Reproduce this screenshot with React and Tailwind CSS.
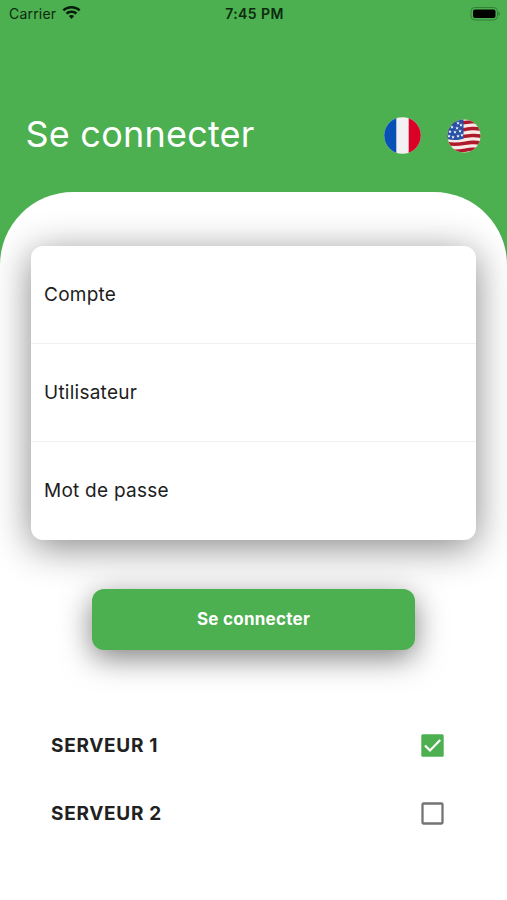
import React from "react";

function StatusBar() {
  return (
    <div className="flex h-7 items-center justify-between pl-[9px] pr-[7px] text-[14px] leading-none text-[#0c2a0f]">
      <div className="flex w-[100px] items-center gap-[6px]">
        <span className="tracking-[0.2px]">Carrier</span>
        <svg className="-mt-[2px]" width="19" height="14" viewBox="0 0 19 14" fill="#071c09">
          <path d="M9.500 0C6 0 2.800 1.300.5 3.500l1.700 1.800C4.200 3.500 6.700 2.500 9.500 2.500s5.300 1 7.300 2.800l1.700-1.800C16.200 1.300 13 0 9.500 0Z" />
          <path d="M9.500 4.500c-2.300 0-4.300.9-5.800 2.300l1.700 1.800c1.100-1 2.500-1.700 4.100-1.700s3 .7 4.100 1.700l1.700-1.800C13.800 5.400 11.800 4.500 9.500 4.500Z" />
          <path d="M9.500 8.900c-1 0-1.900.4-2.600 1.100l2.600 3 2.600-3c-.7-.7-1.600-1.100-2.600-1.100Z" />
        </svg>
      </div>
      <span className="font-semibold tracking-[0.4px]">7:45 PM</span>
      <div className="-mt-px flex w-[100px] justify-end">
        <svg width="31" height="14" viewBox="0 0 31 14">
          <rect x="2" y=".5" width="26.500" height="12.500" rx="3.800" fill="none" stroke="#318136" />
          <rect x="4" y="2.500" width="22.500" height="8.500" rx="2" fill="#000" />
          <path d="M29.500 4.700c1 .4 1.400 1.200 1.400 2.100s-.4 1.700-1.400 2.100Z" fill="#318136" />
        </svg>
      </div>
    </div>
  );
}

function FrenchFlag() {
  return (
    <svg width="37" height="37" viewBox="0 0 37 37">
      <clipPath id="fr"><circle cx="18.500" cy="18.500" r="18.300" /></clipPath>
      <g clipPath="url(#fr)">
        <rect width="37" height="37" fill="#f3f1f2" />
        <rect width="12.300" height="37" fill="#0750b5" />
        <rect x="24.700" width="12.300" height="37" fill="#da0028" />
      </g>
    </svg>
  );
}

const stripes = [0, 1, 2, 3, 4];
const stars = [
  [11, 4], [5, 8], [10, 9], [14, 6], [3, 12.5], [8, 13], [13, 12],
  [2, 17], [6, 18], [11, 17], [15, 16],
];

function AmericanFlag() {
  return (
    <svg width="34" height="34" viewBox="0 0 34 34">
      <clipPath id="us"><circle cx="17" cy="17" r="16.500" /></clipPath>
      <g clipPath="url(#us)">
        <rect width="34" height="34" fill="#f7e9e5" />
        {stripes.map((i) => (
          <path
            key={i}
            transform={`translate(0 ${i * 6.9 - 1})`}
            d="M0 3C6 4.300 12 3.800 18 2.800S28 1.500 34 2.500v3.600c-6-1-10-.8-16 .2s-12 1.500-18 .3Z"
            fill="#ae1a2b"
          />
        ))}
        <path d="M0 0h16.500v19.700c-6 1.800-11 1.700-16.500.3Z" fill="#2850a5" />
        {stars.map(([x, y]) => (
          <path
            key={`${x}-${y}`}
            transform={`translate(${x} ${y})`}
            d="m0-1.800.5 1.200h1.300l-1 .9.400 1.300L0 .9l-1.200.7.400-1.300-1-.9h1.300Z"
            fill="#eef2ff"
          />
        ))}
      </g>
    </svg>
  );
}

function Field({ label }) {
  return (
    <div className="flex flex-1 items-center border-b border-[#f1f1f1] pl-[13px] pt-px text-[19px] tracking-[0.25px] text-[#1d1d1d] last:border-b-0">
      {label}
    </div>
  );
}

function Server({ name, checked }) {
  return (
    <div className="flex h-[68.500px] items-center justify-between">
      <span className="pt-px text-[19px] font-bold tracking-[0.7px] text-[#212121]">{name}</span>
      {checked ? (
        <svg width="23" height="23" viewBox="0 0 23 23">
          <rect x=".3" y=".3" width="22.400" height="22.400" rx="1.500" fill="#4caf50" />
          <path d="m4 11.500 5 5L19.200 6" fill="none" stroke="#fff" strokeWidth="2.200" />
        </svg>
      ) : (
        <svg width="23" height="23" viewBox="0 0 23 23">
          <rect x="1.500" y="1.500" width="20" height="20" rx="1" fill="none" stroke="#747474" strokeWidth="2.300" />
        </svg>
      )}
    </div>
  );
}

export default function App() {
  return (
    <div className="flex h-[900px] w-[507px] flex-col overflow-hidden bg-[#4caf50] font-['Inter',sans-serif]">
      <StatusBar />
      <header className="flex h-[163.500px] items-start justify-between pl-[25.500px] pr-[26px] pt-[84px]">
        <h1 className="text-[36px] leading-[44px] tracking-[0.22px] text-white">Se connecter</h1>
        <div className="flex items-center gap-[26px] pt-[5px]">
          <FrenchFlag />
          <AmericanFlag />
        </div>
      </header>
      <main className="flex flex-1 flex-col items-center rounded-t-[73px] bg-white pt-[54.500px]">
        <section className="flex h-[293.500px] w-[445px] flex-col rounded-[12px] bg-white shadow-[0_7px_38px_rgba(0,0,0,0.48)]">
          <Field label="Compte" />
          <Field label="Utilisateur" />
          <Field label="Mot de passe" />
        </section>
        <button className="mt-[49px] h-[61px] w-[323px] rounded-[12px] bg-[#4caf50] pt-px text-[17px] font-bold tracking-[0.25px] text-white shadow-[0_8px_30px_rgba(0,0,0,0.5)]">
          Se connecter
        </button>
        <section className="mr-[12px] mt-[61.500px] w-[393px]">
          <Server name="SERVEUR 1" checked />
          <Server name="SERVEUR 2" />
        </section>
      </main>
    </div>
  );
}
